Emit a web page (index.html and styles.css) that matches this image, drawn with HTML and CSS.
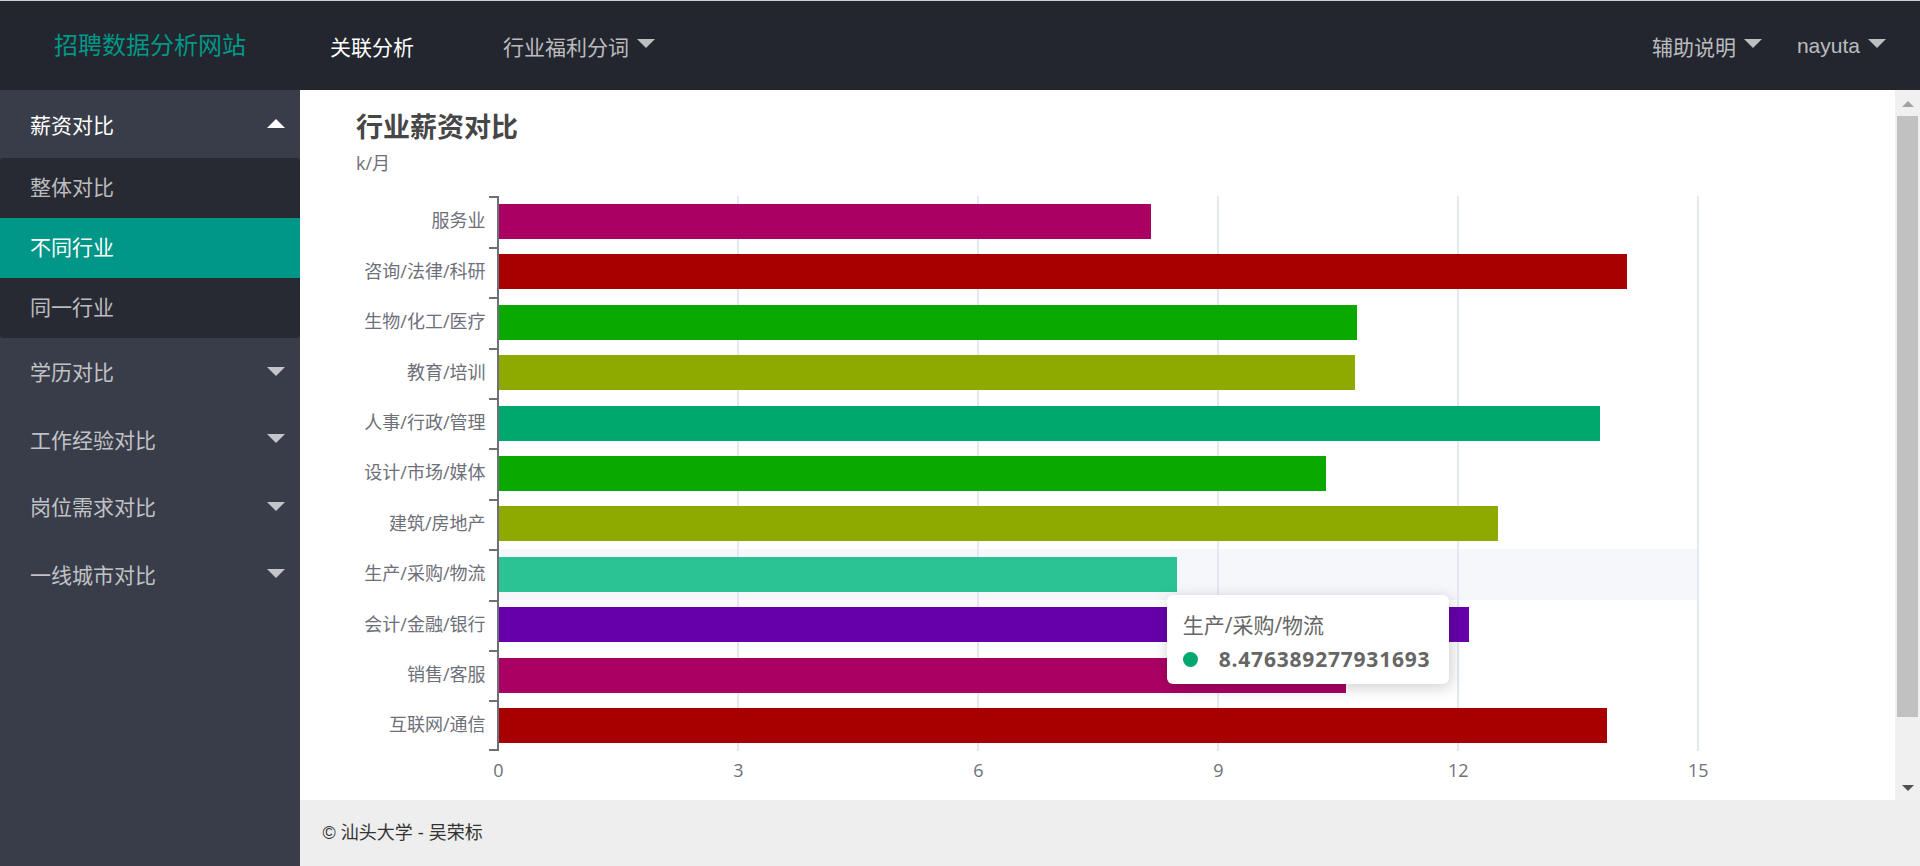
FILE: index.html
```html
<!DOCTYPE html>
<html lang="zh-CN">
<head>
<meta charset="utf-8">
<title>招聘数据分析网站</title>
<link rel="stylesheet" href="styles.css">
</head>
<body>
<div class="layout">
  <header class="header">
    <div class="logo">招聘数据分析网站</div>
    <nav class="nav nav-left">
      <a class="nav-item is-hover">关联分析</a>
      <a class="nav-item has-more">行业福利分词<span class="caret"></span></a>
    </nav>
    <nav class="nav nav-right">
      <a class="nav-item">辅助说明<span class="caret"></span></a>
      <a class="nav-item">nayuta<span class="caret"></span></a>
    </nav>
  </header>

  <aside class="side">
    <ul class="tree">
      <li class="tree-item open">
        <a class="tree-link">薪资对比<span class="caret up"></span></a>
        <dl class="tree-child">
          <dd>整体对比</dd>
          <dd class="active">不同行业</dd>
          <dd>同一行业</dd>
        </dl>
      </li>
      <li class="tree-item"><a class="tree-link">学历对比<span class="caret"></span></a></li>
      <li class="tree-item"><a class="tree-link">工作经验对比<span class="caret"></span></a></li>
      <li class="tree-item"><a class="tree-link">岗位需求对比<span class="caret"></span></a></li>
      <li class="tree-item"><a class="tree-link">一线城市对比<span class="caret"></span></a></li>
    </ul>
  </aside>

  <main class="main">
    <div class="content">
      <section class="chart">
        <h1 class="chart-title">行业薪资对比</h1>
        <p class="chart-sub">k/月</p>
        <div class="plot">
          <div class="row"><span class="cat">服务业</span><div class="cell"><i class="bar c-magenta" style="width:652px"></i></div></div>
          <div class="row"><span class="cat">咨询/法律/科研</span><div class="cell"><i class="bar c-red" style="width:1128px"></i></div></div>
          <div class="row"><span class="cat">生物/化工/医疗</span><div class="cell"><i class="bar c-green" style="width:858px"></i></div></div>
          <div class="row"><span class="cat">教育/培训</span><div class="cell"><i class="bar c-olive" style="width:856px"></i></div></div>
          <div class="row"><span class="cat">人事/行政/管理</span><div class="cell"><i class="bar c-teal" style="width:1101px"></i></div></div>
          <div class="row"><span class="cat">设计/市场/媒体</span><div class="cell"><i class="bar c-green" style="width:827px"></i></div></div>
          <div class="row"><span class="cat">建筑/房地产</span><div class="cell"><i class="bar c-olive" style="width:999px"></i></div></div>
          <div class="row hl"><span class="cat">生产/采购/物流</span><div class="cell"><i class="bar c-teal-hl" style="width:678px"></i></div></div>
          <div class="row"><span class="cat">会计/金融/银行</span><div class="cell"><i class="bar c-purple" style="width:970px"></i></div></div>
          <div class="row"><span class="cat">销售/客服</span><div class="cell"><i class="bar c-magenta" style="width:847px"></i></div></div>
          <div class="row"><span class="cat">互联网/通信</span><div class="cell"><i class="bar c-red" style="width:1108px"></i></div></div>
        </div>
        <div class="xaxis"><span>0</span><span>3</span><span>6</span><span>9</span><span>12</span><span>15</span></div>

        <div class="tooltip">
          <div class="tip-title">生产/采购/物流</div>
          <div class="tip-row"><span class="dot"></span><b class="tip-val">8.476389277931693</b></div>
        </div>
      </section>
    </div>
    <div class="scrollbar">
      <div class="sb-btn"><span class="sb-arrow up"></span></div>
      <div class="sb-track"><div class="sb-thumb"></div></div>
      <div class="sb-btn"><span class="sb-arrow down"></span></div>
    </div>
  </main>

  <footer class="footer">© 汕头大学 - 吴荣标</footer>
</div>
</body>
</html>
```

FILE: styles.css
```css
* { box-sizing: border-box; }
html, body { margin: 0; height: 100%; }
body {
  font-family: "Liberation Sans", "Noto Sans CJK SC", sans-serif;
  overflow: hidden;
}
.layout {
  display: grid;
  grid-template-columns: 300px 1fr;
  grid-template-rows: 90px minmax(0, 1fr) 66px;
  height: 100vh;
}

/* header */
.header {
  grid-column: 1 / -1;
  grid-row: 1;
  display: flex;
  background: #23262E;
  border-top: 1px solid #cfcfcf;
}
.logo {
  flex: none;
  width: 300px;
  text-align: center;
  color: #009688;
  font-size: 24px;
  line-height: 89px;
}
.nav { display: flex; }
.nav-right { margin-left: auto; padding-right: 29px; }
.nav-item {
  display: flex;
  align-items: center;
  padding: 0 30px;
  font-size: 21px;
  color: rgba(255, 255, 255, .7);
  text-decoration: none;
}
.nav-item.is-hover { color: #fff; padding-right: 59px; }
.nav-left .has-more { padding-right: 20px; }
.nav-right .nav-item { padding: 0 5px 0 30px; }
.caret {
  width: 0;
  height: 0;
  border-left: 9px solid transparent;
  border-right: 9px solid transparent;
  border-top: 9px solid currentColor;
}
.nav-item .caret { margin-left: 8px; margin-top: -4px; }
.caret.up { border-top: 0; border-bottom: 9px solid currentColor; }

/* sidebar */
.side {
  grid-column: 1;
  grid-row: 2 / 4;
  background: #393D49;
}
.tree { list-style: none; margin: 0; padding: 0; }
.tree-link {
  display: flex;
  align-items: center;
  justify-content: space-between;
  height: 67.5px;
  padding: 0 15px 0 30px;
  font-size: 21px;
  color: rgba(255, 255, 255, .7);
}
.tree-item.open > .tree-link { color: #fff; }
.tree-child {
  margin: 0;
  background: rgba(0, 0, 0, .3);
  border-radius: 3px;
}
.tree-child dd {
  margin: 0;
  height: 60px;
  line-height: 60px;
  padding-left: 30px;
  font-size: 21px;
  color: rgba(255, 255, 255, .7);
}
.tree-child dd.active { background: #009688; color: #fff; }

/* main */
.main {
  grid-column: 2;
  grid-row: 2;
  display: flex;
  background: #fff;
  overflow: hidden;
  font-family: "Open Sans", "Noto Sans CJK SC", sans-serif;
}
.content { flex: 1; min-width: 0; overflow: hidden; }

.scrollbar {
  flex: none;
  width: 25px;
  display: flex;
  flex-direction: column;
  background: #f0f0f0;
}
.sb-btn {
  height: 25px;
  display: flex;
  align-items: center;
  justify-content: center;
}
.sb-arrow { width: 0; height: 0; border-left: 6px solid transparent; border-right: 6px solid transparent; }
.sb-arrow.up { border-bottom: 6px solid #a3a3a3; margin-top: 2px; }
.sb-arrow.down { border-top: 6px solid #505050; }
.sb-track { flex: 1; padding: 1px 2px 0; }
.sb-thumb { height: 601px; background: #c1c1c1; }

.chart { position: relative; padding: 21.5px 0 91px; }
.chart-title {
  margin: 0 0 0 56px;
  font-family: "Noto Sans CJK SC", sans-serif;
  font-size: 27px;
  line-height: 27px;
  font-weight: 700;
  color: #464646;
}
.chart-sub {
  margin: 15.5px 0 0 56px;
  font-size: 18px;
  line-height: 18px;
  color: #6E7079;
}
.plot { margin-top: 24.4px; }
.row { display: flex; height: 50.4px; }
.cat {
  width: 197px;
  padding-right: 11.5px;
  text-align: right;
  font-size: 18px;
  line-height: 48px;
  color: #6E7079;
  white-space: nowrap;
}
.cell {
  position: relative;
  width: 1202px;
  display: flex;
  align-items: center;
  border-left: 2px solid #6E7079;
  background-image: linear-gradient(to right, transparent 238px, #E3E8F2 238px, #E3E8F2 240px);
  background-size: 240px 100%;
}
.cell::before {
  content: "";
  position: absolute;
  left: -10px;
  top: 0;
  width: 8px;
  height: 2px;
  background: #6E7079;
}
.row:last-child .cell::after {
  content: "";
  position: absolute;
  left: -10px;
  bottom: 0;
  width: 8px;
  height: 2px;
  background: #6E7079;
}
.row.hl .cell { background-color: rgba(210, 219, 238, .22); }
.bar { display: block; height: 35px; }
.c-magenta { background: #aa0064; }
.c-red { background: #a80000; }
.c-green { background: #0aa900; }
.c-olive { background: #8eaa00; }
.c-teal { background: #00a86e; }
.c-teal-hl { background: #2bc394; }
.c-purple { background: #6600aa; }

.xaxis { display: flex; margin: 10px 0 0 78.3px; }
.xaxis span {
  width: 240px;
  text-align: center;
  font-size: 18px;
  line-height: 18px;
  color: #6E7079;
}

.tooltip {
  position: absolute;
  left: 866.7px;
  top: 505px;
  width: 282px;
  padding: 15px 15px 10px 16px;
  background: #fff;
  border-radius: 6px;
  box-shadow: 1.5px 3px 15px rgba(0, 0, 0, .2);
  font-size: 21px;
  color: #666;
}
.tip-title { line-height: 30px; }
.tip-row { display: flex; align-items: center; margin-top: 4px; line-height: 30px; }
.dot {
  width: 15px;
  height: 15px;
  border-radius: 50%;
  background: #00a870;
  margin-right: 21px;
}
.tip-val { font-weight: 700; letter-spacing: .8px; }

/* footer */
.footer {
  grid-column: 2;
  grid-row: 3;
  background: #eee;
  padding-left: 22.5px;
  line-height: 66px;
  font-size: 18px;
  color: #333;
}
```
